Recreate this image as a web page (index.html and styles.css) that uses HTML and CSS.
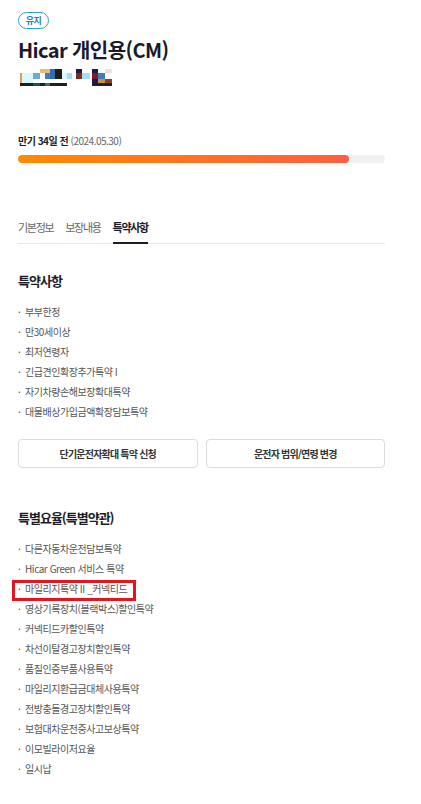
FILE: index.html
```html
<!DOCTYPE html>
<html lang="ko">
<head>
<meta charset="utf-8">
<title>Hicar 개인용(CM)</title>
<link rel="stylesheet" href="styles.css">
</head>
<body>
<main class="page">
  <span class="badge">유지</span>
  <h1 class="title">Hicar 개인용(CM)</h1>
  <div class="mosaic" aria-label="차량번호">
    <div class="mc w2"><i class="c-w"></i><i class="c-or"></i><i class="c-or"></i><i class="c-k"></i></div>
    <div class="mc w11"><i class="c-w"></i><i class="c-cy"></i><i class="c-cy"></i><i class="c-k"></i></div>
    <div class="mc w7"><i class="c-w"></i><i class="c-bl"></i><i class="c-w"></i><i class="c-tl"></i></div>
    <div class="mc w5"><i class="c-be"></i><i class="c-w"></i><i class="c-w"></i><i class="c-k"></i></div>
    <div class="mc w5"><i class="c-be"></i><i class="c-bm"></i><i class="c-w"></i><i class="c-st"></i></div>
    <div class="mc w5"><i class="c-bd"></i><i class="c-bd"></i><i class="c-w"></i><i class="c-k"></i></div>
    <div class="mc w7"><i class="c-k"></i><i class="c-k"></i><i class="c-w"></i><i class="c-k"></i></div>
    <div class="mc w5"><i class="c-w"></i><i class="c-cy"></i><i class="c-w"></i><i class="c-k"></i></div>
    <div class="mc w5"><i class="c-w"></i><i class="c-lb"></i><i class="c-w"></i><i class="c-w"></i></div>
    <div class="mc w4"><i class="c-w"></i><i class="c-w"></i><i class="c-w"></i><i class="c-w"></i></div>
    <div class="mc w6"><i class="c-nv"></i><i class="c-br"></i><i class="c-w"></i><i class="c-w"></i></div>
    <div class="mc w8"><i class="c-w"></i><i class="c-lb"></i><i class="c-w"></i><i class="c-w"></i></div>
    <div class="mc w2"><i class="c-w"></i><i class="c-w"></i><i class="c-w"></i><i class="c-w"></i></div>
    <div class="mc w6"><i class="c-nv"></i><i class="c-rd"></i><i class="c-nv"></i><i class="c-nv"></i></div>
    <div class="mc w7"><i class="c-w"></i><i class="c-bm"></i><i class="c-og"></i><i class="c-nv"></i></div>
    <div class="mc w7"><i class="c-pk"></i><i class="c-w"></i><i class="c-bn"></i><i class="c-nv"></i></div>
  </div>

  <p class="due"><strong>만기 34일 전</strong> <span class="date">(2024.05.30)</span></p>
  <div class="bar"><div class="bar-fill" style="width: 90.2%"></div></div>

  <nav class="tabs">
    <span class="tab">기본정보</span>
    <span class="tab">보장내용</span>
    <span class="tab active">특약사항</span>
  </nav>

  <section class="section">
    <h2 class="heading">특약사항</h2>
    <ul class="list">
      <li>부부한정</li>
      <li>만30세이상</li>
      <li>최저연령자</li>
      <li>긴급견인확장추가특약 I</li>
      <li>자기차량손해보장확대특약</li>
      <li>대물배상가입금액확장담보특약</li>
    </ul>
    <div class="actions">
      <button class="btn" type="button">단기운전자확대 특약 신청</button>
      <button class="btn" type="button">운전자 범위/연령 변경</button>
    </div>
  </section>

  <section class="section second">
    <h2 class="heading">특별요율(특별약관)</h2>
    <ul class="list">
      <li>다른자동차운전담보특약</li>
      <li>Hicar Green 서비스 특약</li>
      <li class="marked">마일리지특약 II _커넥티드</li>
      <li>영상기록장치(블랙박스)할인특약</li>
      <li>커넥티드카할인특약</li>
      <li>차선이탈경고장치할인특약</li>
      <li>품질인증부품사용특약</li>
      <li>마일리지환급금대체사용특약</li>
      <li>전방충돌경고장치할인특약</li>
      <li>보험대차운전중사고보상특약</li>
      <li>이모빌라이저요율</li>
      <li>일시납</li>
    </ul>
  </section>
</main>
</body>
</html>
```

FILE: styles.css
```css
* { box-sizing: border-box; }
html, body { margin: 0; padding: 0; background: #fff; }
body {
  font-family: "Noto Sans CJK KR", "Noto Sans", sans-serif;
  color: #1c1c28;
}
.page {
  width: 385px;
  padding: 12px 0 30px 18px;
}
.badge {
  display: block;
  width: 31px;
  height: 17px;
  border: 1px solid #2b9be4;
  border-radius: 9px;
  color: #1f7fcf;
  font-size: 9px;
  font-weight: 700;
  line-height: 15px;
  text-align: center;
  letter-spacing: -0.5px;
}
.title {
  margin: 7px 0 0;
  font-size: 20px;
  line-height: 28px;
  font-weight: 700;
  letter-spacing: -0.6px;
  color: #1a1a2a;
}
.mosaic {
  display: flex;
  margin: 5px 0 0 2px;
  height: 17px;
}
.mc { display: flex; flex-direction: column; }
.mc i { display: block; }
.mc i:nth-child(1) { height: 4px; }
.mc i:nth-child(2) { height: 6px; }
.mc i:nth-child(3) { height: 4px; }
.mc i:nth-child(4) { height: 3px; }
.w2 { width: 2px; } .w4 { width: 4px; } .w5 { width: 5px; } .w6 { width: 6px; }
.w7 { width: 7px; } .w8 { width: 8px; } .w11 { width: 11px; }
.c-w { background: #fff; }
.c-or { background: #e0a050; }
.c-k { background: #1e1e1e; }
.c-cy { background: #d8fafc; }
.c-bl { background: #6fa8dc; }
.c-tl { background: #1f4f5f; }
.c-be { background: #e8b878; }
.c-bm { background: #3d7fc0; }
.c-st { background: #3a6a8a; }
.c-bd { background: #2e6db0; }
.c-lb { background: #a8dcf2; }
.c-nv { background: #1c1c44; }
.c-br { background: #7a3020; }
.c-rd { background: #7a1a2a; }
.c-og { background: #d09040; }
.c-pk { background: #f0e0d0; }
.c-bn { background: #8b4513; }

.due {
  margin: 48px 0 0;
  font-size: 10px;
  line-height: 14px;
  letter-spacing: -0.5px;
}
.due strong { font-weight: 700; color: #1c1c28; }
.due .date { color: #666; }
.bar {
  margin-top: 7px;
  height: 8px;
  border-radius: 4px;
  background: #f0f1f3;
  overflow: hidden;
}
.bar-fill {
  height: 100%;
  border-radius: 4px;
  background: linear-gradient(90deg, #ff8a00, #ff5e40);
}
.tabs {
  display: flex;
  gap: 12px;
  margin-top: 56px;
  border-bottom: 1px solid #e8e8e8;
}
.tab {
  font-size: 11px;
  line-height: 16px;
  padding-bottom: 7px;
  color: #666;
  letter-spacing: -1.3px;
  border-bottom: 2px solid transparent;
  margin-bottom: -1px;
}
.tab.active {
  color: #1c1c28;
  font-weight: 700;
  border-bottom-color: #1c1c28;
}
.section { margin-top: 28px; }
.section.second { margin-top: 41px; }
.heading {
  margin: 0;
  font-size: 13px;
  line-height: 18px;
  font-weight: 700;
  letter-spacing: -1px;
  color: #1c1c28;
}
.list {
  list-style: none;
  margin: 12px 0 0;
  padding: 0;
}
.list li {
  position: relative;
  width: fit-content;
  font-size: 10px;
  line-height: 20px;
  color: #555;
  letter-spacing: -0.45px;
}
.list li::before {
  content: "·";
  display: inline-block;
  width: 7px;
  letter-spacing: 0;
}
.list li.marked::after {
  content: "";
  position: absolute;
  left: -6px;
  right: -9px;
  top: 1px;
  bottom: -2px;
  border: 3px solid #e8131b;
}
.actions {
  display: grid;
  grid-template-columns: 1fr 1fr;
  gap: 8px;
  margin-top: 17px;
}
.btn {
  height: 29px;
  border: 1px solid #dcdcdc;
  border-radius: 4px;
  background: #fff;
  font-family: inherit;
  font-size: 10px;
  font-weight: 700;
  letter-spacing: -0.8px;
  color: #333;
  padding: 0;
}
```
